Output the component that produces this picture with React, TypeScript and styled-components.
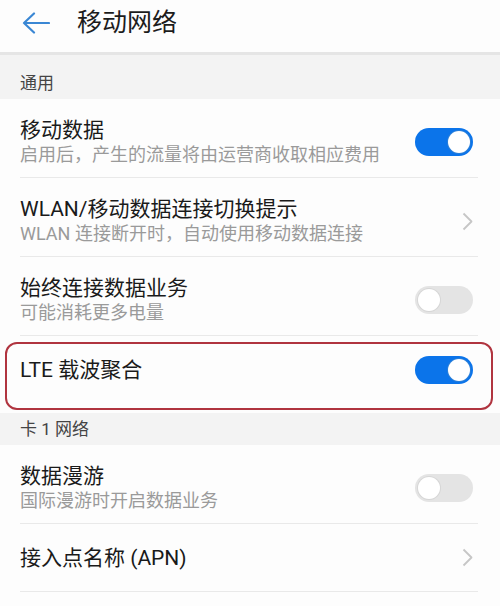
import React from 'react'
import styled, { createGlobalStyle } from 'styled-components'

const GlobalStyle = createGlobalStyle`
  html, body {
    margin: 0;
    padding: 0;
    background: #fdfdfd;
  }
  body {
    font-family: Roboto, "Noto Sans CJK SC", "Noto Sans", sans-serif;
    -webkit-font-smoothing: antialiased;
  }
`

const Screen = styled.div`
  width: 500px;
  height: 606px;
  overflow: hidden;
  background: #fdfdfd;
`

const Header = styled.header`
  height: 55px;
  display: flex;
  align-items: center;
  padding: 0 0 7px 22px;
  box-sizing: border-box;
  border-bottom: 3px solid #e5e5e5;
  background: #fdfdfd;
`

const BackButton = styled.button`
  width: 28px;
  height: 22px;
  padding: 0;
  border: none;
  background: none;
  display: flex;
  margin-right: 27px;
`

const Title = styled.h1`
  margin: 0;
  font-size: 25px;
  font-weight: 400;
  color: #1c1c1c;
  line-height: 30px;
`

const SectionHeader = styled.div<{ $height: number }>`
  height: ${(p) => p.$height}px;
  background: #f3f3f3;
  display: flex;
  align-items: flex-end;
  padding: 0 20px 6px;
  box-sizing: border-box;
  font-size: 17px;
  line-height: 20px;
  color: #444;
`

const Group = styled.div`
  background: #fdfdfd;
`

const Row = styled.div<{ $last?: boolean; $single?: boolean; $extra?: number }>`
  position: relative;
  margin: 0 22px 0 20px;
  padding: ${(p) => (p.$single ? `0 5px ${p.$extra ?? 0}px 0` : '18px 5px 10px 0')};
  height: ${(p) => (p.$single ? `${68 + (p.$extra ?? 0)}px` : 'auto')};
  box-sizing: ${(p) => (p.$single ? 'border-box' : 'content-box')};
  display: flex;
  align-items: center;
  border-bottom: ${(p) => (p.$last ? 'none' : '1px solid #e9e9e9')};
`

const Texts = styled.div`
  flex: 1;
  min-width: 0;
  display: flex;
  flex-direction: column;
`

const ItemTitle = styled.div`
  font-size: 21px;
  line-height: 26px;
  color: #1a1a1a;
  white-space: nowrap;
`

const ItemSub = styled.div`
  font-size: 18px;
  line-height: 24px;
  color: #9a9a9a;
  white-space: nowrap;
`

const Track = styled.div<{ $on: boolean }>`
  position: relative;
  width: 58px;
  height: 28px;
  border-radius: 14px;
  flex-shrink: 0;
  background: ${(p) => (p.$on ? '#0b74ea' : '#e4e4e4')};
`

const Knob = styled.span<{ $on: boolean }>`
  position: absolute;
  top: 3px;
  ${(p) => (p.$on ? 'right: 3px;' : 'left: 3px;')}
  width: 22px;
  height: 22px;
  border-radius: 50%;
  background: #fff;
  box-shadow: ${(p) => (p.$on ? '0 0 0 1px #2b7fd8' : '0 0 0 1px #d6d6d6')};
`

const Highlight = styled.div`
  position: absolute;
  left: -15px;
  right: -15px;
  top: 6px;
  bottom: 3px;
  border: 2.5px solid #b0343f;
  border-radius: 12px;
  pointer-events: none;
`

function Toggle({ on }: { on: boolean }) {
  return (
    <Track $on={on}>
      <Knob $on={on} />
    </Track>
  )
}

function Chevron() {
  return (
    <svg width="11" height="19" viewBox="0 0 11 19" fill="none">
      <path d="M1.5 1.5 L9.5 9.5 L1.5 17.5" stroke="#c6c6c6" strokeWidth="1.8" strokeLinejoin="round" />
    </svg>
  )
}

export default function App() {
  return (
    <Screen>
      <GlobalStyle />
      <Header>
        <BackButton aria-label="返回">
          <svg width="28" height="22" viewBox="0 0 28 22" fill="none">
            <path d="M2 11 H27 M12 1.5 L2 11 L12 20.5" stroke="#3a87d4" strokeWidth="2.2" strokeLinecap="round" strokeLinejoin="round" />
          </svg>
        </BackButton>
        <Title>移动网络</Title>
      </Header>

      <SectionHeader $height={44}>通用</SectionHeader>
      <Group>
        <Row>
          <Texts>
            <ItemTitle>移动数据</ItemTitle>
            <ItemSub>启用后，产生的流量将由运营商收取相应费用</ItemSub>
          </Texts>
          <Toggle on />
        </Row>
        <Row>
          <Texts>
            <ItemTitle>WLAN/移动数据连接切换提示</ItemTitle>
            <ItemSub>WLAN 连接断开时，自动使用移动数据连接</ItemSub>
          </Texts>
          <Chevron />
        </Row>
        <Row>
          <Texts>
            <ItemTitle>始终连接数据业务</ItemTitle>
            <ItemSub>可能消耗更多电量</ItemSub>
          </Texts>
          <Toggle on={false} />
        </Row>
        <Row $single $last $extra={9}>
          <Texts>
            <ItemTitle>LTE 载波聚合</ItemTitle>
          </Texts>
          <Toggle on />
          <Highlight />
        </Row>
      </Group>

      <SectionHeader $height={32}>卡 1 网络</SectionHeader>
      <Group>
        <Row>
          <Texts>
            <ItemTitle>数据漫游</ItemTitle>
            <ItemSub>国际漫游时开启数据业务</ItemSub>
          </Texts>
          <Toggle on={false} />
        </Row>
        <Row $single>
          <Texts>
            <ItemTitle>接入点名称 (APN)</ItemTitle>
          </Texts>
          <Chevron />
        </Row>
      </Group>
    </Screen>
  )
}
